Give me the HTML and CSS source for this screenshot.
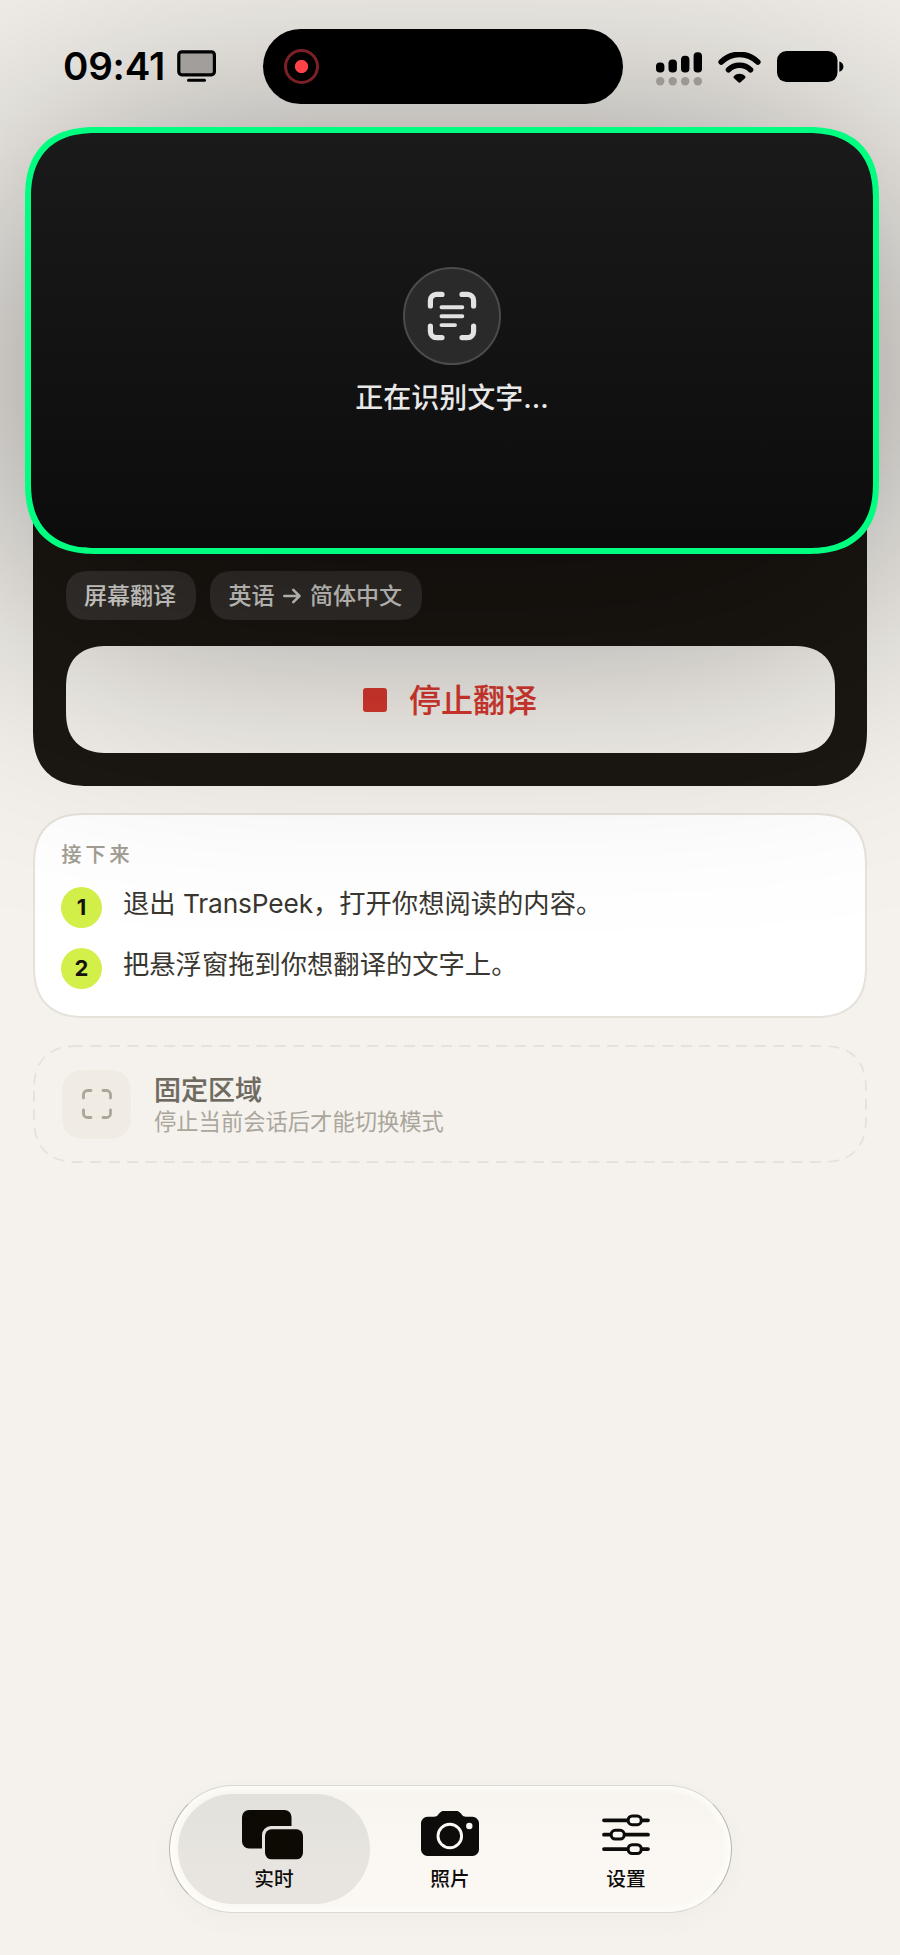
FILE: index.html
```html
<!DOCTYPE html>
<html lang="zh-CN">
<head>
<meta charset="utf-8">
<title>TransPeek</title>
<link rel="stylesheet" href="styles.css">
</head>
<body>
<div class="screen">
  <header class="status">
    <div class="status-left">
      <span class="time">09:41</span>
      <svg class="display" width="40" height="34" viewBox="0 0 40 34">
        <rect x="1.8" y="1.8" width="35.6" height="23" rx="3" fill="#a19e9b" stroke="#000" stroke-width="3.2"/>
        <path d="M11.5 30.2h16" stroke="#000" stroke-width="3" stroke-linecap="round"/>
      </svg>
    </div>
    <div class="island"><span class="record"></span></div>
    <div class="status-right">
      <svg width="47" height="34" viewBox="0 0 47 34">
        <g fill="#000"><rect y="10.5" width="8.4" height="10" rx="3.8"/><rect x="12.5" y="7.5" width="8.4" height="13" rx="3.8"/><rect x="25" y="3.8" width="8.4" height="16.7" rx="3.8"/><rect x="37.6" y="0.3" width="8.4" height="20.2" rx="3.8"/></g>
        <g fill="#9b9894"><circle cx="4.2" cy="29.2" r="4.2"/><circle cx="16.7" cy="29.2" r="4.2"/><circle cx="29.2" cy="29.2" r="4.2"/><circle cx="41.8" cy="29.2" r="4.2"/></g>
      </svg>
      <svg class="wifi" width="43" height="34" viewBox="0 0 43 34">
        <g fill="none" stroke="#000" stroke-width="5.6" stroke-linecap="round"><path d="M3.2 10C13.5-.2 29.5-.2 39.8 10"/><path d="M10.5 17.8C16.5 11.8 26.5 11.8 32.5 17.8"/></g>
        <path d="M16 24c3-3.1 8-3.1 11 0 .8.9.6 1.6-.1 2.300l-4 3.800c-.8.7-2 .7-2.800 0l-4-3.800c-.7-.7-.9-1.400-.1-2.300z" fill="#000"/>
      </svg>
      <svg class="battery" width="68" height="32" viewBox="0 0 68 32">
        <rect width="60.5" height="31" rx="9.5" fill="#000"/><path d="M62.3 10.5c5.5 1.200 5.500 9 0 10.200z" fill="#000"/>
      </svg>
    </div>
  </header>

  <div class="overlay-shadow"></div>
  <section class="overlay">
    <div class="scan-badge">
      <svg width="50" height="50" viewBox="0 0 50 50" fill="none" stroke="#e2e2e2" stroke-linecap="round">
        <path stroke-width="5.2" d="M3.4 15V9.400a6 6 0 0 1 6-6H15M35 3.400h5.600a6 6 0 0 1 6 6V15M46.600 35v5.600a6 6 0 0 1-6 6H35M15 46.600H9.400a6 6 0 0 1-6-6V35"/>
        <path stroke-width="3.900" d="M14.500 16.300h20.800M14.500 25.200h20.800M14.500 34.100h13.500"/>
      </svg>
    </div>
    <p class="scan-text">正在识别文字...</p>
  </section>

  <main class="content">
    <section class="session">
      <div class="chips">
        <span class="chip"><span>屏幕翻译</span></span>
        <span class="chip"><span>英语</span>
          <svg class="arrow" width="18" height="16" viewBox="0 0 18 16" fill="none" stroke="currentColor" stroke-width="2.500" stroke-linecap="round" stroke-linejoin="round"><path d="M1.300 8h15M10.300 1.800 16.500 8l-6.200 6.200"/></svg>
          <span>简体中文</span></span>
      </div>
      <div class="stop"><span class="stop-icon"></span><span class="stop-label">停止翻译</span></div>
    </section>

    <section class="next">
      <h2>接下来</h2>
      <div class="step"><span class="num">1</span><p>退出 <span class="brand">TransPeek</span>，打开你想阅读的内容。</p></div>
      <div class="step"><span class="num">2</span><p>把悬浮窗拖到你想翻译的文字上。</p></div>
    </section>

    <section class="region">
      <svg class="dashes" width="834" height="118" viewBox="0 0 834 118" fill="none"><path d="M44 1H790C819 1 833 16 833 44V74C833 102 819 117 790 117H44C15 117 1 102 1 74V44C1 16 15 1 44 1Z" stroke="#e6e2da" stroke-width="1.800" stroke-dasharray="11 7.450" stroke-dashoffset="5"/></svg>
      <div class="tile">
        <svg width="30" height="30" viewBox="0 0 30 30" fill="none" stroke="#aaa69c" stroke-width="2.800" stroke-linecap="round"><path d="M1.500 9V5.500a4 4 0 0 1 4-4H9M21 1.500h3.500a4 4 0 0 1 4 4V9M28.500 21v3.500a4 4 0 0 1-4 4H21M9 28.500H5.500a4 4 0 0 1-4-4V21"/></svg>
      </div>
      <div class="region-text"><h3>固定区域</h3><p>停止当前会话后才能切换模式</p></div>
    </section>
  </main>

  <nav class="tabs">
    <div class="tab active">
      <svg class="icon-live" width="62" height="50" viewBox="0 0 62 50" fill="#0d0a04"><path d="M7 0h35.500a7 7 0 0 1 7 7v9H29a9 9 0 0 0-9 9v13.500H7a7 7 0 0 1-7-7V7a7 7 0 0 1 7-7z"/><rect x="23" y="19.300" width="38" height="30" rx="6.500"/></svg>
      <span>实时</span>
    </div>
    <div class="tab">
      <svg class="icon-photo" width="58" height="46" viewBox="0 0 58 46"><path d="M6.500 5.800H13c2 0 3.200-.8 4.300-2.200l1.200-1.500C19.700.6 21 0 23 0h12c2 0 3.300.6 4.500 2.100l1.200 1.500c1.100 1.400 2.300 2.200 4.300 2.200h6.500a6.500 6.500 0 0 1 6.500 6.500v26.200a6.500 6.500 0 0 1-6.500 6.500h-45A6.500 6.500 0 0 1 0 38.500V12.300a6.500 6.500 0 0 1 6.500-6.500z" fill="#0e0c0b"/><circle cx="28.800" cy="25" r="11.800" fill="none" stroke="#fbf9f5" stroke-width="2.900"/><circle cx="48.300" cy="15" r="3.200" fill="#fbf9f5"/></svg>
      <span>照片</span>
    </div>
    <div class="tab">
      <svg class="icon-settings" width="48" height="42" viewBox="0 0 48 42" stroke="#0e0c0b" stroke-width="3.800" stroke-linecap="round"><path d="M2 6.300h44M2 20.700h44M2 35.100h44"/><g fill="#fbf9f5" stroke-width="3"><rect x="26.200" y="1.900" width="13" height="8.800" rx="4"/><rect x="9.200" y="16.300" width="13" height="8.800" rx="4"/><rect x="26.200" y="30.700" width="13" height="8.800" rx="4"/></g></svg>
      <span>设置</span>
    </div>
  </nav>
</div>
</body>
</html>
```
FILE: styles.css
```css
* { box-sizing: border-box; }
body { margin: 0; }
h2, h3, p { margin: 0; font-weight: 400; }
svg { display: block; flex: none; }

.screen {
  position: relative;
  display: flex;
  flex-direction: column;
  width: 900px;
  height: 1955px;
  overflow: hidden;
  background: #f5f2ed;
  font-family: Inter, "Noto Sans CJK SC", sans-serif;
}

/* Status bar */
.status {
  position: relative;
  z-index: 3;
  display: flex;
  height: 126px;
  flex: none;
}
.status-left {
  display: flex;
  width: 263px;
  padding: 42px 0 0 63px;
}
.time {
  width: 114px;
  font-size: 38.5px;
  font-weight: 600;
  line-height: 48px;
  letter-spacing: -0.2px;
}
.display { margin-top: 8px; }
.island {
  width: 360px;
  height: 75px;
  margin-top: 28.5px;
  padding: 20.5px 21px;
  border-radius: 38px;
  background: #000;
}
.record {
  display: block;
  width: 35px;
  height: 35px;
  border: 3px solid #7a2026;
  border-radius: 50%;
  background: radial-gradient(circle, #ff4247 6.2px, #000 7px);
}
.status-right {
  display: flex;
  padding: 51.5px 0 0 33px;
}
.wifi { margin-left: 15px; }
.battery { margin: -1px 0 0 16px; }

/* Floating translation window */
.overlay-shadow {
  position: absolute;
  z-index: 1;
  top: 162px;
  left: 25px;
  width: 854px;
  height: 427px;
  background: rgba(0, 0, 0, 0.5);
  filter: blur(150px);
  pointer-events: none;
}
.overlay {
  position: absolute;
  z-index: 2;
  top: 127px;
  left: 25px;
  display: flex;
  flex-direction: column;
  align-items: center;
  width: 854px;
  height: 427px;
  padding-top: 134px;
  border: 6px solid #00ff80;
  border-radius: 62px;
  background: linear-gradient(#1a1a1b, #0c0c0c);
}
.scan-badge {
  display: flex;
  align-items: center;
  justify-content: center;
  width: 98px;
  height: 98px;
  border: 2px solid #4b4b4b;
  border-radius: 50%;
  background: #2a2a2a;
}
.scan-text {
  margin-top: 13px;
  color: #e8e8e8;
  font-size: 28px;
  font-weight: 500;
  line-height: 40px;
}

/* Content column */
.content {
  display: flex;
  flex-direction: column;
  gap: 27px;
  padding: 24px 33px 0;
}
.session {
  height: 636px;
  padding: 421px 32.5px 0;
  border-radius: 50px;
  background: #1b1712;
}
.chips { display: flex; gap: 14px; }
.chip {
  display: flex;
  align-items: center;
  height: 49px;
  padding: 0 20px 0 18.5px;
  border-radius: 20px;
  background: #35312e;
  color: #e4e2df;
  font-size: 23px;
  font-weight: 500;
}
.chip span { margin-top: -3px; }
.arrow { margin: 0 9px 0 8.5px; }
.stop {
  display: flex;
  align-items: center;
  justify-content: center;
  height: 107px;
  margin-top: 26px;
  border-radius: 36px;
  background: #f5f2ed;
  color: #d8382e;
  font-size: 32px;
  font-weight: 500;
}
.stop-label {
  margin-top: -4px;
  -webkit-text-stroke: 0.2px currentColor;
}
.stop-icon {
  width: 24px;
  height: 24px;
  margin-right: 22px;
  border-radius: 3px;
  background: #d8382e;
}

.next {
  height: 205px;
  padding: 26px 26.5px 0;
  border: 2px solid #e6e2da;
  border-radius: 44px;
  background: #fff;
}
.next h2 {
  color: #a29d92;
  font-size: 20px;
  font-weight: 500;
  line-height: 28px;
  letter-spacing: 4px;
  -webkit-text-stroke: 0.2px currentColor;
}
.step { display: flex; height: 61px; padding-top: 18px; }
.num {
  width: 41px;
  height: 41px;
  margin-left: -0.5px;
  border-radius: 50%;
  background: #d2ef4a;
  color: #16140c;
  font-size: 22px;
  font-weight: 700;
  line-height: 41px;
  text-align: center;
}
.step p {
  margin: -3px 0 0 21px;
  color: #3a3731;
  font-size: 26.3px;
  line-height: 40px;
}
.brand { letter-spacing: -0.15px; }

.region {
  position: relative;
  display: flex;
  height: 118px;
  padding: 24.5px 29px 0;
}
.dashes { position: absolute; top: 0; left: 0; }
.tile {
  display: flex;
  align-items: center;
  justify-content: center;
  width: 69px;
  height: 69px;
  border-radius: 20px;
  background: #f0ece4;
}
.region-text { padding: 4.5px 0 0 23px; }
.region-text h3 {
  color: #6e6a60;
  font-size: 27px;
  font-weight: 500;
  line-height: 34px;
  -webkit-text-stroke: 0.2px currentColor;
}
.region-text p {
  margin-top: -1px;
  color: #aaa69c;
  font-size: 22.3px;
  line-height: 30px;
}

/* Tab bar */
.tabs {
  position: relative;
  z-index: 2;
  display: flex;
  width: 563px;
  height: 128px;
  margin: auto auto 42.5px 169px;
  padding: 8px;
  border: 1px solid;
  border-color: #dbd7d1 #b9b5af;
  border-radius: 64px;
  background: linear-gradient(#f7f4ef, #fbf8f3 50%);
  box-shadow: inset 0 0 7px 3px #fffefa, 0 8px 24px rgba(80, 70, 50, 0.03);
}
.tab {
  display: flex;
  flex-direction: column;
  align-items: center;
  justify-content: flex-end;
  width: 160px;
  padding-bottom: 11px;
  color: #0e0c0b;
}
.tab span {
  margin-top: 6px;
  font-size: 19.7px;
  font-weight: 500;
  line-height: 28px;
}
.icon-live { margin: 0 2px -1.5px 0; }
.icon-photo { margin-bottom: 1.5px; }
.icon-settings { margin-bottom: 3px; }
.tab.active {
  width: 192px;
  border-radius: 56px;
  background: linear-gradient(#e3e1dc, #e8e5e0 70%);
}
.tab:nth-child(3) { width: 192px; }

/* Continuous corners */
@supports (corner-shape: squircle) {
  .overlay { border-radius: 72px; corner-shape: superellipse(1.3); }
  .session { border-radius: 56px; corner-shape: superellipse(1.3); }
  .stop { border-radius: 42px; corner-shape: superellipse(1.3); }
  .next { border-radius: 52px; corner-shape: superellipse(1.3); }
  .chip, .tile { border-radius: 23px; corner-shape: superellipse(1.3); }
}
```
